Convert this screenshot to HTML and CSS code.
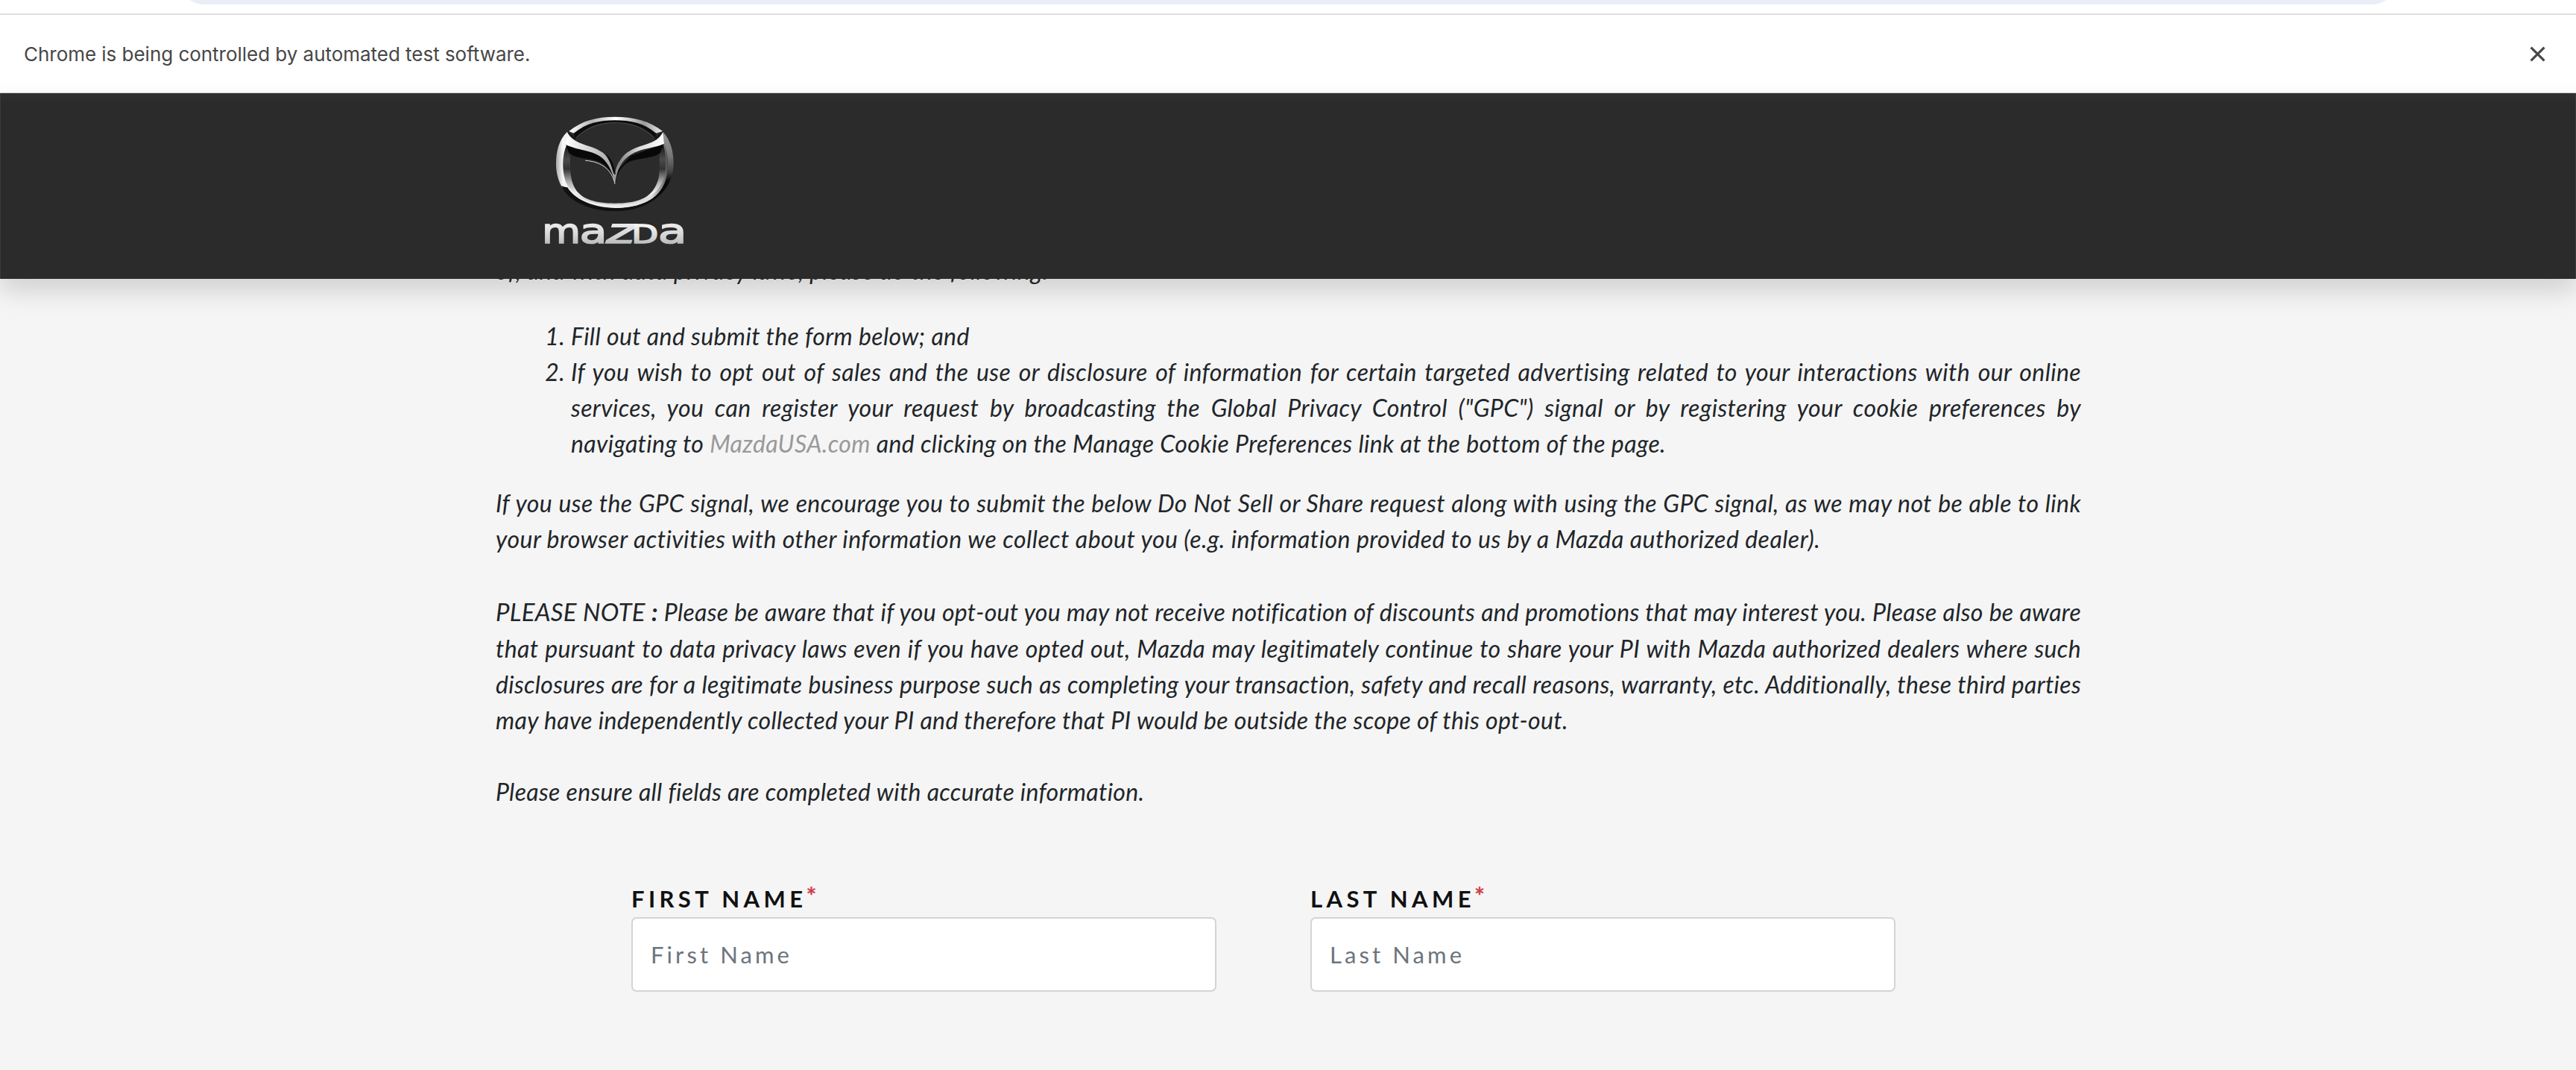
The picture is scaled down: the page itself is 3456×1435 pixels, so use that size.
FILE: index.html
```html
<!DOCTYPE html>
<html lang="en">
<head>
<meta charset="utf-8">
<title>Mazda Privacy Request</title>
<link rel="stylesheet" href="styles.css">
</head>
<body>
<div class="toolbar"><div class="omnibox"></div></div>
<div class="infobar">
  <span class="infobar-text">Chrome is being controlled by automated test software.</span>
  <svg class="close" viewBox="0 0 20 20"><path d="M1.5 1.5 18.5 18.5M18.5 1.5 1.5 18.5"/></svg>
</div>
<header class="site-header">
  <svg class="logo" viewBox="0 0 750 600" role="img" aria-label="Mazda">
    <defs>
      <linearGradient id="top" x1="0" x2="1" y1="0" y2="0"><stop offset="0" stop-color="#fff"/><stop offset=".25" stop-color="#b5b5b5"/><stop offset=".5" stop-color="#fff"/><stop offset=".8" stop-color="#999"/><stop offset="1" stop-color="#eee"/></linearGradient>
      <linearGradient id="outer" x1="0" x2="1" y1="0" y2="0"><stop offset="0" stop-color="#aaa"/><stop offset=".06" stop-color="#f5f5f5"/><stop offset=".5" stop-color="#eee"/><stop offset=".85" stop-color="#ddd"/><stop offset=".97" stop-color="#777"/><stop offset="1" stop-color="#444"/></linearGradient>
      <linearGradient id="inner" x1="0" x2="0" y1="0" y2="1"><stop offset="0" stop-color="#111"/><stop offset=".25" stop-color="#4b4b4b"/><stop offset=".4" stop-color="#333"/><stop offset=".62" stop-color="#b5b5b5"/><stop offset=".78" stop-color="#efefef"/><stop offset="1" stop-color="#c4c4c4"/></linearGradient>
      <linearGradient id="shade" x1="0" x2="0" y1="0" y2="1"><stop offset="0" stop-color="#999"/><stop offset=".3" stop-color="#777"/><stop offset=".5" stop-color="#444"/><stop offset=".62" stop-color="#0b0b0b"/><stop offset="1" stop-color="#050505"/></linearGradient>
      <linearGradient id="wing" x1="0" x2="1" y1="0" y2="0"><stop offset="0" stop-color="#fff"/><stop offset=".25" stop-color="#d2d2d2"/><stop offset=".45" stop-color="#aaa"/><stop offset=".55" stop-color="#888"/><stop offset=".75" stop-color="#ddd"/><stop offset="1" stop-color="#fff"/></linearGradient>
      <linearGradient id="word" x1="0" x2="0" y1="0" y2="1"><stop offset="0.2" stop-color="#f4f4f4"/><stop offset=".6" stop-color="#d5d5d5"/><stop offset="1" stop-color="#a2a5a5"/></linearGradient>
    </defs>
    <!-- right flank and lower shadow -->
    <path fill="url(#shade)" d="M568 110C600 145 611 190 611 238C611 350 510 429 375 429C250 429 170 365 155 315C190 385 270 416 375 416C500 416 575 365 586 270C590 230 584 190 572 160Z"/>
    <!-- inner bowl -->
    <path fill="url(#inner)" fill-rule="evenodd" d="M182 160C165 200 162 245 167 285C184 370 255 412 375 412C500 412 566 370 582 285C588 245 584 200 570 158L554 195C555 240 556 270 550 300C530 370 480 398 375 398C270 398 215 370 200 300C193 265 196 230 194 195Z"/>
    <!-- outer silver rim -->
    <path fill="url(#outer)" d="M183 110C148 145 138 190 138 240C138 275 147 305 160 330C200 388 270 418 375 418C500 418 575 365 587 270C590 230 588 190 573 155L569 160C580 190 582 240 577 280C555 370 480 404 375 404C255 404 195 365 175 305C160 255 164 200 182 160Z"/>
    <path fill="#111" d="M160 326C165 331 175 333 184 334C215 385 290 415 375 417C445 418 520 398 560 350C520 410 445 429 375 429C265 429 175 380 160 326Z"/>
    <!-- top band -->
    <path fill="#0d0d0d" d="M207 116C265 65 315 62 375 62C440 62 495 70 543 116L535 136C490 90 435 76 375 76C310 76 265 90 217 138Z"/>
    <path fill="none" stroke="#777" stroke-width="2" d="M219 134C265 90 315 74 375 74C435 74 490 90 533 134"/>
    <path fill="url(#top)" d="M190 108C240 66 300 50 375 50C450 50 515 66 567 108L541 116C490 75 440 64 375 64C310 64 262 75 209 116Z"/>
    <!-- wings -->
    <path fill="#080808" d="M178 162L314 204L375 275L440 206L572 160L556 197C520 220 465 215 430 232C400 250 384 275 377 318H373C365 275 345 248 314 232C270 214 222 222 190 196Z"/>
    <path fill="#171717" d="M186 110L220 136L211 142L184 116ZM568 108L533 134L540 141L570 116Z"/>
    <path fill="url(#wing)" d="M183 112C197 138 216 150 258 164C305 178 333 193 349 218C362 238 370 255 375 282C380 250 386 238 400 218C418 193 444 178 490 164C535 150 556 137 568 110L573 158C548 170 520 172 480 184C440 197 415 215 398 245C387 265 381 280 375 322C368 285 360 265 347 243C330 216 308 200 270 190C225 179 200 174 178 162Z"/>
    <path fill="#0b0b0b" d="M330 194C360 215 369 235 375 270L377 282C372 283 370 277 366 266C358 236 348 214 330 194Z"/>
    <path fill="none" stroke="#ddd" stroke-width="3" d="M256 226C320 230 363 262 375 320"/>
    <!-- wordmark -->
    <g class="wordmark">
      <text transform="translate(82 558) scale(1.17 1)" font-size="136">m</text>
      <text transform="translate(233 558) scale(1.32 1)" font-size="136">a</text>
      <text transform="translate(329 558) scale(1.62 1) skewX(-12)" font-size="138">z</text>
      <text transform="translate(442 558) scale(1.36 1)" font-size="103">D</text>
      <text transform="translate(549 558) scale(1.38 1)" font-size="136">a</text>
    </g>
  </svg>
</header>
<main class="content">
  <p class="clipped">of, and with data privacy laws, please do the following:</p>
  <ol class="steps">
    <li>Fill out and submit the form below; and</li>
    <li><span class="line">If you wish to opt out of sales and the use or disclosure of information for certain targeted advertising related to your interactions with our online</span>
    <span class="line">services, you can register your request by broadcasting the Global Privacy Control ("GPC") signal or by registering your cookie preferences by</span>
    <span class="last">navigating to <a>MazdaUSA.com</a> and clicking on the Manage Cookie Preferences link at the bottom of the page.</span></li>
  </ol>
  <p class="gpc"><span class="line">If you use the GPC signal, we encourage you to submit the below Do Not Sell or Share request along with using the GPC signal, as we may not be able to link</span>
  <span class="last wide">your browser activities with other information we collect about you (e.g. information provided to us by a Mazda authorized dealer).</span></p>
  <p class="note"><span class="line first"><span class="lead">PLEASE NOTE <b>:</b></span> Please be aware that if you opt-out you may not receive notification of discounts and promotions that may interest you. Please also be aware</span>
  <span class="line">that pursuant to data privacy laws even if you have opted out, Mazda may legitimately continue to share your PI with Mazda authorized dealers where such</span>
  <span class="line tight">disclosures are for a legitimate business purpose such as completing your transaction, safety and recall reasons, warranty, etc. Additionally, these third parties</span>
  <span class="last">may have independently collected your PI and therefore that PI would be outside the scope of this opt-out.</span></p>
  <p class="ensure">Please ensure all fields are completed with accurate information.</p>
  <form class="fields">
    <label class="field"><span class="label">FIRST NAME<sup>*</sup></span><input type="text" placeholder="First Name"></label>
    <label class="field"><span class="label">LAST NAME<sup>*</sup></span><input type="text" placeholder="Last Name"></label>
  </form>
</main>
</body>
</html>
```
FILE: styles.css
```css
* { box-sizing: border-box; }
body { margin: 0; height: 1435px; overflow: hidden; background: #f5f5f5; color: #212529; font-family: Lato, sans-serif; }
.toolbar { height: 20px; background: #fff; border-bottom: 2px solid #e1e1e1; overflow: hidden; }
.omnibox { height: 6px; margin: 0 240px; background: #ebeef7; clip-path: inset(-62px 0 0 0 round 34px); }
.infobar { height: 105px; padding: 0 41px 0 32px; display: flex; align-items: center; justify-content: space-between; background: #fff; border-bottom: 1px solid #d5d5d5; }
.infobar-text { padding-top: 2px; font: 26px/40px Inter, sans-serif; letter-spacing: -.03px; color: #474747; }
.close { width: 21px; height: 21px; fill: none; stroke: #474747; stroke-width: 3; }
.site-header { position: relative; height: 249px; padding: 15px 0 0 699px; background: linear-gradient(#2f3130, #2b2b2b 12px); border: solid #3b3b3b; border-width: 0 1px; box-shadow: 0 16px 32px rgba(0, 0, 0, .15); }
.logo { display: block; width: 250px; height: 200px; }
.wordmark { font-family: "DejaVu Sans", sans-serif; fill: url(#word); stroke: url(#word); stroke-width: 5; }
.content { width: 2127px; margin: -35px auto 0 665px; font-size: 32px; line-height: 48px; letter-spacing: .38px; font-style: italic; font-variant-ligatures: none; }
.content p, .steps { margin: 0; }
.content .clipped { letter-spacing: .38px; }
.steps { margin-top: 40px; padding-left: 101px; }
.line, .last { display: block; white-space: nowrap; }
.line { text-align: justify; text-align-last: justify; }
.first { padding-bottom: 1px; letter-spacing: .28px; }
.tight { letter-spacing: .3px; }
.wide { letter-spacing: .46px; }
.steps a { color: #999; }
.content .gpc { margin-top: 32px; }
.content .note { margin-top: 50px; letter-spacing: .34px; }
.lead { font-size: 33px; line-height: 1; }
.ensure { padding-top: 48px; letter-spacing: .32px; }
.fields { display: flex; gap: 126px; margin: 107px 0 0 182px; font-style: normal; }
.field { display: flex; flex-direction: column; width: 785px; }
.label { height: 37px; line-height: 24px; font-size: 31px; font-weight: 700; letter-spacing: 5.4px; color: #111; }
.label sup { margin-left: -1px; color: #d0424d; font-size: 33px; font-weight: 900; line-height: 0; vertical-align: 4px; }
input { height: 100px; padding: 0 24px; border: 2px solid #d3d4d5; border-radius: 7px; background: #fff; font: 31px Lato, sans-serif; letter-spacing: 4.1px; }
input::placeholder { color: #6c757d; opacity: 1; }
```
